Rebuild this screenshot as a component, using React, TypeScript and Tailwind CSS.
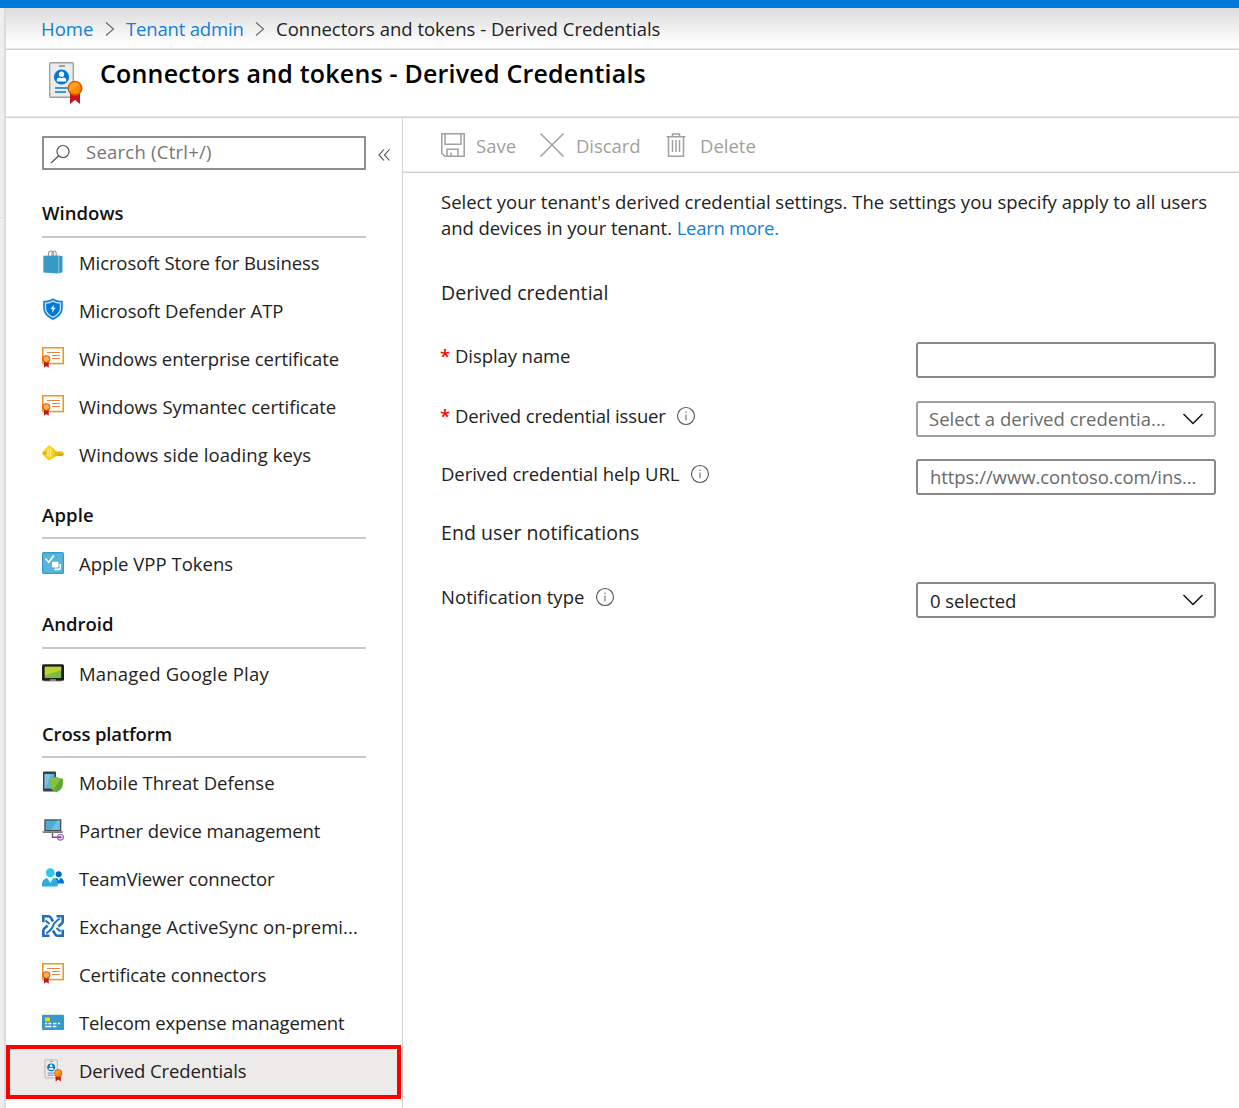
import type { ReactNode } from 'react';

type IconProps = { className?: string };

function BadgeIcon({ className }: IconProps) {
  return (
    <svg className={className} viewBox="0 0 36 44" fill="none">
      <rect x="1.7" y="1.7" width="23.6" height="34.6" rx="1" fill="#ececec" stroke="#a0a0a0" strokeWidth="1.4" />
      <rect x="11" y="4.2" width="6" height="1.6" fill="#8a8a8a" />
      <circle cx="13.5" cy="16" r="7.6" fill="#0078d7" />
      <circle cx="13.5" cy="13.2" r="2.6" fill="#fff" />
      <path d="M8.8 20.5v-1.4c0-1.6 1.3-2.4 2.6-2.6l2.1.8 2.1-.8c1.3.2 2.6 1 2.6 2.6v1.4z" fill="#fff" />
      <path d="M7 27h13M7 31h11" stroke="#0078d7" strokeWidth="1.4" />
      <path d="M22 33h10v10l-5-4-5 4z" fill="#c4161c" />
      <circle cx="27" cy="27.3" r="7.5" fill="#dd5900" />
      <circle cx="27" cy="27.3" r="5.7" fill="#ff8c00" />
      <path d="M22 30.5a5.7 5.7 0 0 1 9.5-6.8z" fill="#ff9d28" />
    </svg>
  );
}

function BagIcon() {
  return (
    <svg className="h-[24px] w-[22px]" viewBox="0 0 22 24" fill="none">
      <path d="M6.500 7V3.500Q6.500 1 9 1t2.500 2.500V7M10 6V3q.4-2 2.200-2 2 0 2 2.500V7" stroke="#999" strokeWidth="1.100" />
      <path d="M1.300 5.800l15-.3v18L1.300 22.500z" fill="#3999c6" />
      <path d="M16.300 5.500l4 .8V22l-4 1.500z" fill="#59b4d9" />
      <path d="M17.300 5.700v17.500l3-1.200V6.300z" fill="#3999c6" />
    </svg>
  );
}

function ShieldIcon() {
  return (
    <svg className="mb-[2px] size-[22px]" viewBox="0 0 22 22">
      <path d="M11 .3C8 2.200 5 2.800 1.200 2.800V10c0 5.500 4 9.500 9.800 11.900C16.800 19.500 20.800 15.500 20.800 10V2.800C17 2.800 14 2.200 11 .3z" fill="#1580dd" />
      <path d="M11 2.200C8.500 3.800 6 4.300 2.900 4.400V10c0 4.500 3.200 7.700 8.100 9.900 4.900-2.200 8.100-5.400 8.100-9.900V4.400C16 4.300 13.500 3.800 11 2.200z" fill="#cfe6fa" />
      <path d="M11 3.700C9 5 6.700 5.500 4.200 5.600V10c0 3.800 2.700 6.600 6.800 8.500 4.100-1.900 6.800-4.700 6.800-8.500V5.600C15.300 5.500 13 5 11 3.700z" fill="#0078d7" />
      <path d="M11.900 6.500L8.500 11.100h2.200l-1 3.800 4-5.200h-2.300z" fill="#fff" />
    </svg>
  );
}

function CertificateIcon() {
  return (
    <svg className="mb-[2px] size-[22px]" viewBox="0 0 22 22" fill="none">
      <rect x=".75" y="1.750" width="20.500" height="15.800" fill="#fff" stroke="#f59316" strokeWidth="1.500" />
      <path d="M5 6.500h13M10 9.500h8M10 12.500h8" stroke="#e8843a" strokeWidth="1.100" />
      <path d="M2 15h4.700v6.700l-2.350-1.600L2 21.700z" fill="#c4161c" />
      <circle cx="4.400" cy="13" r="3.300" fill="#ffb34d" stroke="#e5502a" strokeWidth="1.100" />
    </svg>
  );
}

function KeyIcon() {
  return (
    <svg className="size-[22px]" viewBox="0 0 22 22">
      <path d="M10 8.800h10.500q1.500 1.200 1.300 3l-2 1.700-1-1-1.200 1-1.200-1-1.200 1-1.200-1-1 1H11z" fill="#c4a21c" />
      <path d="M7 2.500Q8 2.500 9 3.500l5 5.300h6.500q1.500.7 1.500 2H13l-4.600 6q-1.400 1.200-2.800 0L.5 11.500q-1-1.500 0-2.700L5.500 3.500Q6 2.500 7 2.500z" fill="#fcd116" />
      <path d="M8.400 16.800l4.900-6-3-7 3.700 5h6.500" fill="#e5bd08" />
      <path d="M6 5.500v8M8.500 5.500v8" stroke="#fff0a0" strokeWidth="1.200" />
      <circle cx="2.800" cy="10.200" r="1.200" fill="#a0a1a2" />
    </svg>
  );
}

function VppIcon() {
  return (
    <svg className="size-[22px]" viewBox="0 0 22 22" fill="none">
      <rect x=".6" y=".6" width="20.800" height="20.800" rx="1" fill="#59b4d9" stroke="#3999c6" strokeWidth="1.200" />
      <path d="M3.500 6.500l3.300 3.700L11.800 3.500" stroke="#fff" strokeWidth="1.600" />
      <rect x="10" y="9.800" width="6.500" height="5.600" rx="1" fill="#fff" />
      <path d="M18.300 12v3.500q0 1.900-1.900 1.900H12.500" stroke="#fff" strokeWidth="1.600" />
    </svg>
  );
}

function PlayDeviceIcon() {
  return (
    <svg className="size-[22px]" viewBox="0 0 22 22">
      <path d="M2 18.500h18l-1 1.300H3z" fill="#b8b8b8" />
      <rect y="2.200" width="22" height="16.600" rx="1.500" fill="#1e1e1e" />
      <path d="M8 17.300h6v1.500H8z" fill="#a0a1a2" />
      <path d="M2.800 4.800h16.400V16H2.800z" fill="#7fba42" />
      <path d="M2.800 4.800h16.400v3.400L2.800 13.500z" fill="#b8d432" />
    </svg>
  );
}

function ThreatIcon() {
  return (
    <svg className="size-[22px]" viewBox="0 0 22 22">
      <rect x="1" y=".5" width="13" height="20" rx="1" fill="#3e3e40" />
      <path d="M2.600 3H12.500v14.500H2.600z" fill="#59b4d9" />
      <path d="M2.600 3H9L3.500 17.500h-.9z" fill="#7cc4e2" />
      <path d="M14.500 5.500c-2 1.400-4 1.900-6.500 2v5.700c0 4 2.900 6.500 6.500 8.200 3.600-1.700 6.500-4.200 6.500-8.200V7.500c-2.500-.1-4.500-.6-6.500-2z" fill="#8cc65a" />
      <path d="M14.500 6.200c-2 1.300-3.800 1.800-5.900 1.900v5.100c0 3.700 2.600 6 5.900 7.600 3.300-1.600 5.900-3.900 5.900-7.600V8.100c-2.100-.1-3.900-.6-5.900-1.900z" fill="#5fa33a" />
      <path d="M14.500 6.200c-2 1.300-3.800 1.800-5.900 1.900v5.100c0 2.400 1.100 4.200 2.800 5.600L18.700 7.900c-1.500-.2-2.800-.8-4.200-1.700z" fill="#86c440" />
    </svg>
  );
}

function PartnerIcon() {
  return (
    <svg className="size-[22px]" viewBox="0 0 22 22" fill="none">
      <path d="M2.300.3h17v12h-17z" fill="#4a4a4c" />
      <path d="M3.600 1.600h14.300v9.400H3.600z" fill="#4bacd6" />
      <path d="M9 11L15 1.600h2.900V11z" fill="#6dc0e4" />
      <path d="M.3 12.300h20.900l-.6 1.700H.9z" fill="#7a7a7a" />
      <path d="M10.500 14v4.300H18" stroke="#804998" strokeWidth="1.400" />
      <ellipse cx="18.500" cy="18.300" rx="3" ry="2.800" stroke="#9a5bb5" strokeWidth="1.200" />
      <circle cx="18.400" cy="18.300" r="1.200" fill="#804998" />
    </svg>
  );
}

function PeopleIcon() {
  return (
    <svg className="size-[22px]" viewBox="0 0 22 22">
      <circle cx="16.700" cy="7.200" r="3" fill="#0063c8" />
      <path d="M11 16.500q0-5 4-5.800l1.700 2.200 1.700-2.200q3.600.8 3.600 5.800z" fill="#0078d4" />
      <circle cx="8.300" cy="5.800" r="4.500" fill="#32c8ee" />
      <path d="M0 19.500v-2.200q.3-5.300 5.200-6.300l3.100 3.600 3.100-3.600q4.600 1 4.600 6.300 0 2.200-1.600 2.200z" fill="#28aee0" />
      <path d="M5.200 11h6.200l-3.100 5z" fill="#e2f7fd" />
      <path d="M15 10.700h3.400l-1.700 3z" fill="#e2f7fd" />
    </svg>
  );
}

function ExchangeIcon() {
  return (
    <svg className="size-[22px]" viewBox="0 0 22 22" fill="none" stroke="#1e6fba" strokeWidth="2.600">
      <path d="M1.300 7.300V1.300H6.500Q8 1.300 8.800 2.700L11 6.500" />
      <path d="M20.700 14.700v6H15.500q-1.500 0-2.300-1.400L11 15.500" />
      <path d="M14.500 1.300h6.200v5.200q0 1.200-1 2.100l-3.400 2.900" />
      <path d="M7.500 20.700H1.300v-5.200q0-1.200 1-2.100l3.400-2.900" />
      <path d="M3.500 5.500l4 3.600M18.500 16.500l-4-3.600" strokeWidth="2" />
      <path d="M17.800 3.500Q12 7.500 11 11T4.200 18.500" strokeWidth="2" />
    </svg>
  );
}

function CardIcon() {
  return (
    <svg className="size-[22px]" viewBox="0 0 22 22">
      <rect y="3.800" width="22" height="15.300" rx="1" fill="#3999c6" />
      <rect x="3" y="6.500" width="5" height="3.800" fill="#fcd116" />
      <path d="M3 12.500h2.200M6.500 12.500h3M11 12.500h3.500M16 12.500h2M3 15.500h6.500M11 15.500h3.500" stroke="#fff" strokeWidth="1.300" />
    </svg>
  );
}

function InfoIcon() {
  return (
    <svg className="-mt-px size-[20px] shrink-0" viewBox="0 0 20 20" fill="none">
      <circle cx="10" cy="10" r="8.500" stroke="#555" strokeWidth="1.100" />
      <path d="M10 8.500v5.700M10 5.500v1.500" stroke="#777" strokeWidth="1.200" />
    </svg>
  );
}

function Crumb() {
  return (
    <svg className="h-4 w-[10px]" viewBox="0 0 10 16" fill="none">
      <path d="M1 1.500l7.500 6.500L1 14.500" stroke="#666" strokeWidth="1.100" />
    </svg>
  );
}

function Chevron() {
  return (
    <svg className="h-3 w-[22px] shrink-0" viewBox="0 0 22 12" fill="none">
      <path d="M1.500 1l9.500 9.500L20.500 1" stroke="#111" strokeWidth="1.500" />
    </svg>
  );
}

function Required() {
  return <span className="-ml-px w-[15px] font-semibold text-[#f00]">*</span>;
}

type Item = { label: string; icon: ReactNode; text: string; selected?: boolean };

function Section({ title, titleText, pad, items }: { title: string; titleText: string; pad: string; items: Item[] }) {
  return (
    <section>
      <div className={`mr-[36px] ml-[36px] border-b-2 border-[#c8c8c8] ${pad}`}>
        <h2 className={`h-[26px] w-fit leading-[26px] font-semibold whitespace-nowrap text-[#111] ${titleText}`}>{title}</h2>
      </div>
      <ul className="pt-px">
        {items.map((it) => (
          <li key={it.label} className={`flex h-12 items-center pl-[36px] ${it.selected ? 'bg-[#edebe9]' : ''}`}>
            <span className="flex w-[37px] shrink-0 pb-[2px]">{it.icon}</span>
            <span className={`whitespace-nowrap ${it.text}`}>{it.label}</span>
          </li>
        ))}
      </ul>
    </section>
  );
}

const windows: Item[] = [
  { label: 'Microsoft Store for Business', icon: <BagIcon />, text: 'tracking-[-0.09px]' },
  { label: 'Microsoft Defender ATP', icon: <ShieldIcon />, text: 'tracking-[-0.04px]' },
  { label: 'Windows enterprise certificate', icon: <CertificateIcon />, text: 'tracking-[-0.08px]' },
  { label: 'Windows Symantec certificate', icon: <CertificateIcon />, text: 'tracking-[-0.01px]' },
  { label: 'Windows side loading keys', icon: <KeyIcon />, text: 'tracking-[0.09px]' },
];
const apple: Item[] = [{ label: 'Apple VPP Tokens', icon: <VppIcon />, text: 'tracking-[0.02px]' }];
const android: Item[] = [{ label: 'Managed Google Play', icon: <PlayDeviceIcon />, text: 'tracking-[0.2px]' }];
const cross: Item[] = [
  { label: 'Mobile Threat Defense', icon: <ThreatIcon />, text: 'tracking-[-0.01px]' },
  { label: 'Partner device management', icon: <PartnerIcon />, text: 'tracking-[-0.12px]' },
  { label: 'TeamViewer connector', icon: <PeopleIcon />, text: 'tracking-[-0.15px]' },
  { label: 'Exchange ActiveSync on-premi...', icon: <ExchangeIcon />, text: 'tracking-[0.06px]' },
  { label: 'Certificate connectors', icon: <CertificateIcon />, text: 'tracking-[-0.07px]' },
  { label: 'Telecom expense management', icon: <CardIcon />, text: 'tracking-[-0.16px]' },
  { label: 'Derived Credentials', icon: <BadgeIcon className="ml-[2px] h-[23px] w-[19px]" />, text: 'tracking-[-0.1px]', selected: true },
];

export default function App() {
  return (
    <div className="flex h-[1108px] w-[1239px] flex-col overflow-hidden bg-white font-['Open_Sans','Noto_Sans',sans-serif] text-[18.5px] leading-[26px] text-[#222]">
      <div className="h-2 shrink-0 bg-[#0078d7]" />
      <div className="flex min-h-0 flex-1">
        <div className="h-full w-[4px] shrink-0 bg-[#eeeeee] pt-[209px]">
          <div className="h-px bg-[#ddd]" />
        </div>
        <div className="flex min-w-0 flex-1 flex-col border-l-2 border-[#dadada]">
          <nav className="flex h-[42px] shrink-0 items-center border-b border-[#cfcfcf] bg-linear-to-b from-[#dcdcdc] to-white to-90% pt-px pl-[35px] whitespace-nowrap shadow-[inset_0_-1px_0_#e8e8e8]">
            <a className="w-[64px] text-[#0f7fdb]">Home</a>
            <Crumb />
            <a className="ml-[11px] w-[129px] tracking-[-0.17px] text-[#0f7fdb]">Tenant admin</a>
            <Crumb />
            <span className="ml-[11px]">Connectors and tokens - Derived Credentials</span>
          </nav>
          <header className="flex h-[68px] shrink-0 border-b border-[#cfcfcf] pt-[11px] pl-[42px] shadow-[inset_0_-1px_0_#e8e8e8]">
            <BadgeIcon className="h-[44px] w-[36px]" />
            <h1 className="-mt-px ml-[16px] h-[28px] text-[25px] leading-[26px] font-semibold tracking-[0.2px] whitespace-nowrap text-black">
              Connectors and tokens - Derived Credentials
            </h1>
          </header>
          <div className="flex min-h-0 flex-1">
            <aside className="relative w-[397px] shrink-0 border-r border-[#d4d4d4] pt-[18px]">
              <div className="flex items-center pl-[36px]">
                <div className="flex h-[34px] w-[324px] items-center border-2 border-[#8f8f8f] pl-[6px]">
                  <svg className="mt-px h-5 w-[22px]" viewBox="0 0 22 20" fill="none">
                    <circle cx="13" cy="7.500" r="6" stroke="#555" strokeWidth="1.200" />
                    <path d="M8.800 11.800L1 19" stroke="#555" strokeWidth="1.300" />
                  </svg>
                  <span className="-mt-[2px] ml-[14px] tracking-[0.24px] text-[#767676]">Search (Ctrl+/)</span>
                </div>
                <svg className="mt-[4px] ml-[12px] h-3 w-3" viewBox="0 0 12 12" fill="none">
                  <path d="M6 .5L1 6l5 5.500M11.500.5L6.500 6l5 5.500" stroke="#444" strokeWidth="1.100" />
                </svg>
              </div>
              <Section title="Windows" titleText="tracking-[0.05px]" pad="pt-[30px] pb-[10px]" items={windows} />
              <Section title="Apple" titleText="tracking-[0.15px]" pad="pt-[23px] pb-[9px]" items={apple} />
              <Section title="Android" titleText="tracking-[0px]" pad="pt-[23px] pb-[10px]" items={android} />
              <Section title="Cross platform" titleText="tracking-[-0.15px]" pad="pt-[23px] pb-[9px]" items={cross} />
              <div className="absolute top-[927px] left-0 h-[54px] w-[395px] border-4 border-[#fe0000]" />
            </aside>
            <main className="min-w-0 flex-1">
              <div className="flex h-[55px] items-center border-b border-[#cfcfcf] pl-[38px] text-[#a19f9d] shadow-[inset_0_-1px_0_#e8e8e8]">
                <svg className="size-6" viewBox="0 0 24 24" fill="none" stroke="#a0a0a0" strokeWidth="1.500">
                  <path d="M.8.8h22.400v22.400H4L.8 20.500zM4 .8v10.400h16V.8M6 23V16.200h11V23M10 19.500V23" />
                </svg>
                <span className="ml-[11px] w-[64px] pt-px">Save</span>
                <svg className="size-6" viewBox="0 0 24 24" fill="none" stroke="#a0a0a0" strokeWidth="1.500">
                  <path d="M.5.5l23 23M23.500.5l-23 23" />
                </svg>
                <span className="ml-[12px] w-[90px] pt-px tracking-[-0.05px]">Discard</span>
                <svg className="h-6 w-5" viewBox="0 0 20 24" fill="none" stroke="#a0a0a0" strokeWidth="1.500">
                  <path d="M.5 3.800h19M6.500 3.800V1h7v2.800M2.500 3.800v19.400h15V3.800M6.500 7v12M10 7v12M13.500 7v12" />
                </svg>
                <span className="ml-[14px] pt-px">Delete</span>
              </div>
              <div className="pr-[23px] pl-[38px] whitespace-nowrap">
                <p className="pt-[16px] tracking-[-0.01px]">
                  Select your tenant's derived credential settings. The settings you specify apply to all users
                  <br />
                  <span className="tracking-[-0.06px]">and devices in your tenant. </span>
                  <a className="tracking-[-0.28px] text-[#0f7fdb]">Learn more.</a>
                </p>
                <h3 className="mt-[39px] text-[19.5px] tracking-[0.06px]">Derived credential</h3>
                <div className="mt-[36px] flex h-9 items-start justify-between">
                  <label className="flex pt-px"><Required /><span className="tracking-[-0.08px]">Display name</span></label>
                  <div className="h-9 w-[300px] rounded-[3px] border-2 border-[#8a8886]" />
                </div>
                <div className="mt-[23px] flex h-9 items-start justify-between">
                  <label className="flex items-center pt-[2px]"><Required /><span className="w-[221px] tracking-[-0.14px]">Derived credential issuer</span><InfoIcon /></label>
                  <div className="flex h-9 w-[300px] items-center justify-between rounded-[3px] border-2 border-[#a19f9d] pr-[10px] pl-[11px] text-[#6a6a6a]"><span>Select a derived credentia...</span><Chevron /></div>
                </div>
                <div className="mt-[22px] flex h-9 items-start justify-between">
                  <label className="flex items-center pt-[2px]"><span className="w-[249px] tracking-[-0.05px]">Derived credential help URL</span><InfoIcon /></label>
                  <div className="flex h-9 w-[300px] items-center rounded-[3px] border-2 border-[#8a8886] pl-[12px] text-[#6a6a6a]"><span className="tracking-[-0.06px]">https://www.contoso.com/ins...</span></div>
                </div>
                <h3 className="mt-[25px] text-[19.5px] tracking-[0.06px]">End user notifications</h3>
                <div className="mt-[36px] flex h-9 items-start justify-between">
                  <label className="flex items-center pt-[2px]"><span className="w-[154px] tracking-[0.06px]">Notification type</span><InfoIcon /></label>
                  <div className="flex h-9 w-[300px] items-center justify-between rounded-[3px] border-2 border-[#8a8886] pr-[10px] pl-[12px]"><span className="pt-px tracking-[-0.05px]">0 selected</span><Chevron /></div>
                </div>
              </div>
            </main>
          </div>
        </div>
      </div>
    </div>
  );
}
